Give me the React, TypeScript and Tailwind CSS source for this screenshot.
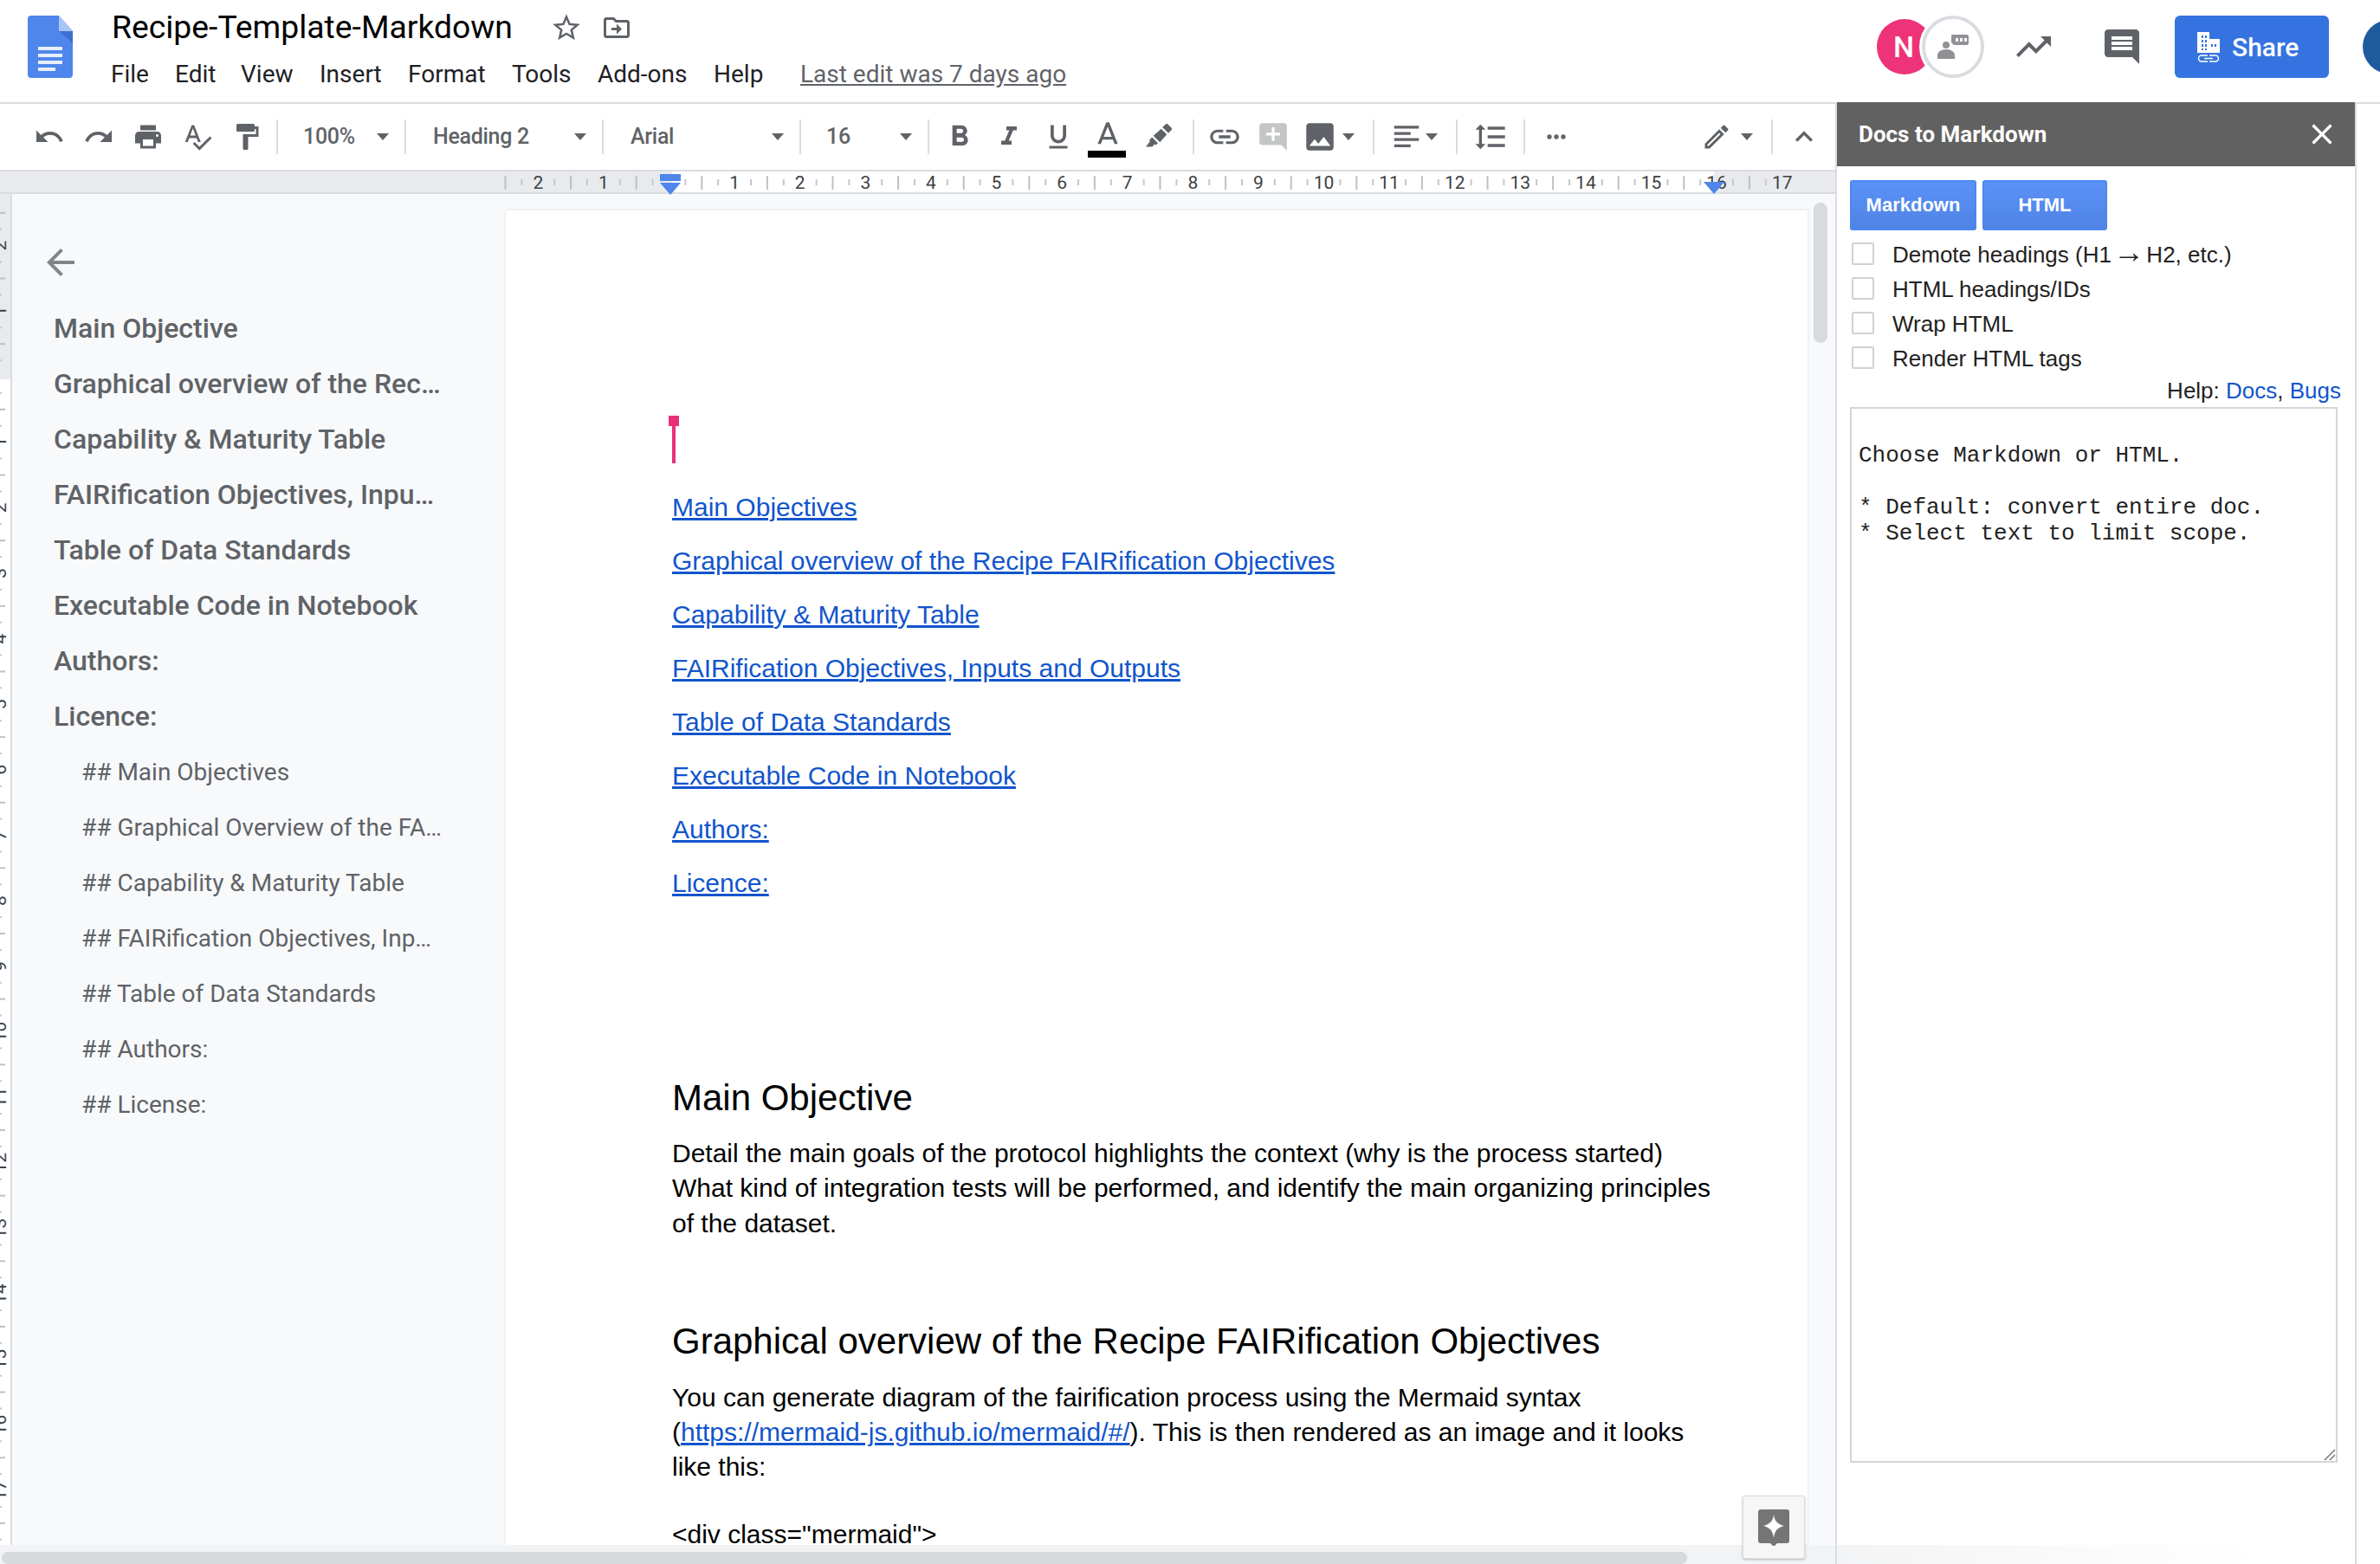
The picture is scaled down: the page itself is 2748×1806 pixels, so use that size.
import React from 'react';

const paths = {
  undo: 'M12.5 8c-2.65 0-5.05.99-6.9 2.6L2 7v9h9l-3.62-3.62c1.39-1.16 3.16-1.88 5.12-1.88 3.54 0 6.55 2.31 7.6 5.5l2.37-.78C21.08 11.03 17.15 8 12.5 8z',
  redo: 'M18.4 10.6C16.55 8.99 14.15 8 11.5 8c-4.65 0-8.58 3.03-9.96 7.22L3.9 16c1.05-3.19 4.05-5.5 7.6-5.5 1.95 0 3.73.72 5.12 1.88L13 16h9V7l-3.6 3.6z',
  print: 'M19 8H5c-1.66 0-3 1.34-3 3v6h4v4h12v-4h4v-6c0-1.66-1.34-3-3-3zm-3 11H8v-5h8v5zm3-7c-.55 0-1-.45-1-1s.45-1 1-1 1 .45 1 1-.45 1-1 1zm-1-9H6v4h12V3z',
  spell: 'M12.45 16h2.09L9.43 3H7.57L2.46 16h2.09l1.12-3h5.64l1.14 3zm-6.02-5L8.5 5.48 10.57 11H6.43zm15.16.59l-8.09 8.09L9.83 16l-1.41 1.41 5.09 5.09L23 13l-1.41-1.41z',
  paint: 'M18 4V3c0-.55-.45-1-1-1H5c-.55 0-1 .45-1 1v4c0 .55.45 1 1 1h12c.55 0 1-.45 1-1V6h1v4H9v11c0 .55.45 1 1 1h2c.55 0 1-.45 1-1v-9h8V4h-3z',
  bold: 'M15.6 10.79c.97-.67 1.65-1.77 1.65-2.79 0-2.26-1.75-4-4-4H7v14h7.04c2.09 0 3.71-1.7 3.71-3.79 0-1.52-.86-2.82-2.15-3.42zM10 6.5h3c.83 0 1.5.67 1.5 1.5s-.67 1.5-1.5 1.5h-3v-3zm3.5 9H10v-3h3.5c.83 0 1.5.67 1.5 1.5s-.67 1.5-1.5 1.5z',
  italic: 'M10 4v3h2.21l-3.42 8H6v3h8v-3h-2.21l3.42-8H18V4z',
  underline: 'M12 17c3.31 0 6-2.69 6-6V3h-2.5v8c0 1.93-1.57 3.5-3.5 3.5S8.5 12.93 8.5 11V3H6v8c0 3.31 2.69 6 6 6zm-7 2v2h14v-2H5z',
  letterA: 'M11 2L5 17h2.25l1.2-3h7.1l1.2 3H19L13 2h-2zm-1.75 10L12 4.9 14.75 12h-5.5z',
  marker: 'M17.4 2.2a1 1 0 011.4 0l3 3a1 1 0 010 1.4l-2.4 2.6-4.6-4.6zM13.800 5.800l4.400 4.400-5.400 6-5-5zM6.800 12.300l4.500 4.500-1.300 1.400-1.500-.3L7 19.600H2l3-3.700-.2-1.500z',
  link: 'M3.9 12c0-1.71 1.39-3.1 3.1-3.1h4V7H7c-2.76 0-5 2.24-5 5s2.24 5 5 5h4v-1.9H7c-1.71 0-3.1-1.39-3.1-3.1zM8 13h8v-2H8v2zm9-6h-4v1.9h4c1.71 0 3.1 1.39 3.1 3.1s-1.39 3.1-3.1 3.1h-4V17h4c2.76 0 5-2.24 5-5s-2.24-5-5-5z',
  commentAdd: 'M22 4c0-1.1-.9-2-2-2H4c-1.1 0-2 .9-2 2v12c0 1.1.9 2 2 2h14l4 4V4zm-5 7h-4v4h-2v-4H7V9h4V5h2v4h4v2z',
  image: 'M21 19V5c0-1.1-.9-2-2-2H5c-1.1 0-2 .9-2 2v14c0 1.1.9 2 2 2h14c1.1 0 2-.9 2-2zM8.5 13.5l2.5 3.01L14.5 12l4.500 6H5l3.5-4.5z',
  align: 'M3 4h18v2H3V4zm0 4.500h12v2H3v-2zM3 13h18v2H3v-2zm0 4.500h12v2H3v-2z',
  lineSpacing: 'M6 7h2.5L5 3.5 1.5 7H4v10H1.5L5 20.5 8.5 17H6V7zm4-2v2h12V5H10zm0 14h12v-2H10v2zm0-6h12v-2H10v2z',
  dots: 'M6 10a2 2 0 100 4 2 2 0 000-4zm6 0a2 2 0 100 4 2 2 0 000-4zm6 0a2 2 0 100 4 2 2 0 000-4z',
  pencil: 'M14.06 9.02l.92.92L5.92 19H5v-.92l9.06-9.06M17.66 3c-.25 0-.51.1-.7.29l-1.83 1.83 3.75 3.75 1.83-1.83c.39-.39.39-1.02 0-1.41l-2.34-2.34c-.2-.2-.45-.29-.71-.29zm-3.6 3.19L3 17.25V21h3.75L17.81 9.94l-3.75-3.75z',
  up: 'M12 8l-6 6 1.41 1.41L12 10.83l4.59 4.58L18 14z',
  trend: 'M16 6l2.29 2.29-4.88 4.88-4-4L2 16.59 3.41 18l6-6 4 4 6.3-6.29L22 12V6z',
  comment: 'M21.99 4c0-1.1-.89-2-1.99-2H4c-1.1 0-2 .9-2 2v12c0 1.1.9 2 2 2h14l4 4-.01-18zM18 14H6v-2h12v2zm0-3H6V9h12v2zm0-3H6V6h12v2z',
  star: 'M22 9.24l-7.19-.62L12 2 9.19 8.63 2 9.24l5.46 4.73L5.82 21 12 17.27 18.18 21l-1.63-7.03L22 9.24zM12 15.4l-3.76 2.27 1-4.28-3.32-2.88 4.38-.38L12 6.1l1.71 4.04 4.38.38-3.32 2.88 1 4.28L12 15.4z',
  move: 'M20 6h-8l-2-2H4c-1.1 0-2 .9-2 2v12c0 1.1.9 2 2 2h16c1.1 0 2-.9 2-2V8c0-1.1-.9-2-2-2zm0 12H4V6h5.17l2 2H20v10zm-8-1l4-4-4-4v3H8v2h4v3z',
  back: 'M20 11H7.83l5.59-5.59L12 4l-8 8 8 8 1.41-1.41L7.83 13H20v-2z',
  close: 'M19 6.41L17.59 5 12 10.59 6.41 5 5 6.41 10.59 12 5 17.59 6.41 19 12 13.41 17.59 19 19 17.59 13.41 12z',
};

const Icon = ({ d, size = 36, className = '' }: { d: string; size?: number; className?: string }) => (
  <svg viewBox="0 0 24 24" width={size} height={size} fill="currentColor" className={className}>
    <path d={d} />
  </svg>
);

const Caret = () => (
  <svg viewBox="0 0 14 10" width={14} height={10} fill="#5f6368" className="shrink-0">
    <path d="M0 1h14L7 9z" />
  </svg>
);

const Sep = () => <div className="w-[2px] h-[40px] bg-[#dadce0] shrink-0" />;

const Slot = ({ d, w = 'w-[57px]', size = 36, className = '' }: { d: string; w?: string; size?: number; className?: string }) => (
  <div className={`${w} shrink-0 flex items-center justify-center ${className}`}>
    <Icon d={d} size={size} />
  </div>
);

const Select = ({ label, w, pad = 'pl-[31px]' }: { label: string; w: string; pad?: string }) => (
  <div className={`${w} h-full shrink-0 flex items-center justify-between ${pad} pr-[18px]`}>
    <span className="text-[25px] font-medium text-[#5f6368] tracking-[-0.3px]">{label}</span>
    <Caret />
  </div>
);

const DocsLogo = () => (
  <svg viewBox="0 0 52 72" width={52} height={72}>
    <path d="M4 0h32l16 18v50a4 4 0 01-4 4H4a4 4 0 01-4-4V4a4 4 0 014-4z" fill="#4e86ec" />
    <path d="M36 0l16 18H36z" fill="#a9c4f7" />
    <path d="M36 18l16 14V18z" fill="#3d6fd0" />
    <path d="M12 36h28v4H12zm0 8h28v4H12zm0 8h28v4H12zm0 8h20v4H12z" fill="#e8eefb" />
  </svg>
);

const ShareIcon = () => (
  <svg viewBox="0 0 26 35" width={26} height={35} fill="white">
    <path
      fillRule="evenodd"
      d="M0 0h14v8h12v16H0zM5 4v3h2V4zm4 0v3h2V4zM5 9v3h2V9zm4 0v3h2V9zM5 14v3h2v-3zm4 0v3h2v-3zm7 0v3h2v-3zm4 0v3h2v-3zM5 19v2h2v-2zm4 0v2h2v-2z"
    />
    <path d="M12 27H5a3.500 3.500 0 000 7h7M14 27h7a3.500 3.500 0 010 7h-7M8 30.500h10" fill="none" stroke="white" strokeWidth="1.500" />
  </svg>
);

const PeopleIcon = () => (
  <svg viewBox="0 0 44 44" width={44} height={44} fill="#8f9195">
    <circle cx="14" cy="20" r="4" />
    <path d="M4 36v-4c0-4 4-7 10-7s10 3 10 7v4z" />
    <path d="M23 8h15a2 2 0 012 2v8a2 2 0 01-2 2H23l-3-3v-7a2 2 0 013-2z" />
    <path d="M25 12h3v4h-3zm5 0h3v4h-3zm5 0h3v4h-3z" fill="#fff" />
  </svg>
);

const ruler0 = 772.5;
const inch = 75.6;

const HorizontalRuler = () => {
  const ticks: React.ReactNode[] = [];
  for (let i = -10; i <= 68; i++) {
    const x = ruler0 + (i * inch) / 4;
    if (x < 580 || x > 2090) continue;
    const n = i / 4;
    if (i % 4 === 0) {
      if (n !== 0) {
        ticks.push(
          <text key={i} x={x} y={20} textAnchor="middle" fontSize="21" fill="#3c4043" fontFamily="Roboto, sans-serif">
            {Math.abs(n)}
          </text>,
        );
      }
    } else if (i % 2 === 0) {
      ticks.push(<rect key={i} x={x - 1} y={5} width={2} height={16} fill="#bdc1c6" />);
    } else {
      ticks.push(<rect key={i} x={x - 1} y={9} width={2} height={7} fill="#c4c7cb" />);
    }
  }
  return (
    <div className="relative h-[28px] bg-[#e8eaed] border-t-2 border-b-2 border-[#dadce0] shrink-0">
      <svg width={2119} height={24} className="block">
        <rect x={776} y={0} width={1203} height={24} fill="#fff" />
        {ticks}
      </svg>
      <svg width={26} height={24} className="absolute left-[761px] top-[3px]" fill="#4e86ec">
        <rect x={1} y={0} width={24} height={8} />
        <path d="M1 10h24L13 24z" />
      </svg>
      <svg width={26} height={14} className="absolute left-[1966px] top-[12px]" fill="#4e86ec">
        <path d="M1 0h24L13 14z" />
      </svg>
    </div>
  );
};

// the digits sit mostly past the left window edge, as in the real editor
const VerticalRuler = () => {
  const items: React.ReactNode[] = [];
  for (let i = -10; i <= 72; i++) {
    const y = 211 + (i * 75.65) / 4;
    const n = i / 4;
    if (i % 4 === 0) {
      if (n !== 0) {
        items.push(
          <text key={i} transform={`translate(7 ${y}) rotate(-90)`} textAnchor="middle" fontSize="21" fill="#3c4043" fontFamily="Roboto, sans-serif">
            {Math.abs(n)}
          </text>,
        );
      }
    } else if (i % 2 === 0) {
      items.push(<rect key={i} x={0} y={y - 1} width={6} height={2} fill="#bdc1c6" />);
    } else {
      items.push(<rect key={i} x={0} y={y - 1} width={2} height={2} fill="#c4c7cb" />);
    }
  }
  return (
    <div className="w-[14px] shrink-0 bg-white border-r-2 border-[#dadce0] overflow-hidden">
      <svg width={12} height={1560} className="block">
        <rect width={12} height={214} fill="#e8eaed" />
        {items}
      </svg>
    </div>
  );
};

const headings = [
  'Main Objective',
  'Graphical overview of the Rec…',
  'Capability & Maturity Table',
  'FAIRification Objectives, Inpu…',
  'Table of Data Standards',
  'Executable Code in Notebook',
  'Authors:',
  'Licence:',
];

const subHeadings = [
  '## Main Objectives',
  '## Graphical Overview of the FA…',
  '## Capability & Maturity Table',
  '## FAIRification Objectives, Inp…',
  '## Table of Data Standards',
  '## Authors:',
  '## License:',
];

const tocLinks = [
  'Main Objectives',
  'Graphical overview of the Recipe FAIRification Objectives',
  'Capability & Maturity Table',
  'FAIRification Objectives, Inputs and Outputs',
  'Table of Data Standards',
  'Executable Code in Notebook',
  'Authors:',
  'Licence:',
];

const options: React.ReactNode[] = [
  <>
    Demote headings (H1 <span className="inline-block -mx-[5px] text-[36px] leading-[0]">→</span> H2, etc.)
  </>,
  'HTML headings/IDs',
  'Wrap HTML',
  'Render HTML tags',
];

const Outline = () => (
  <aside className="w-[570px] shrink-0 pt-[55px] font-['Roboto',sans-serif] text-[#5f6368]">
    <Icon d={paths.back} size={48} className="ml-[32px] text-[#80868b]" />
    <div className="mt-[20px] pl-[48px]">
      {headings.map((h) => (
        <div key={h} className="h-[64px] flex items-center text-[32px] font-medium whitespace-nowrap">
          {h}
        </div>
      ))}
      <div className="h-[1px]" />
      {subHeadings.map((h) => (
        <div key={h} className="h-[64px] flex items-center pl-[32px] text-[28px] whitespace-nowrap">
          {h}
        </div>
      ))}
    </div>
  </aside>
);

const Page = () => (
  <main className="relative w-[1503px] shrink-0 mt-[19px] bg-white shadow-[0_0_3px_rgba(0,0,0,0.12)] pl-[192px] font-['Liberation_Sans',Arial,sans-serif] text-black">
    <div className="relative w-[12px] h-[55px] mt-[237px] -ml-[4px]">
      <div className="w-[12px] h-[12px] bg-[#e8317a]" />
      <div className="w-[4px] h-[43px] ml-[4px] bg-[#e8317a]" />
    </div>
    <div className="mt-[19px]">
      {tocLinks.map((l) => (
        <div key={l} className="h-[62px] flex items-center text-[30px]">
          <span className="text-[#1155cc] underline">{l}</span>
        </div>
      ))}
    </div>
    <h2 className="mt-[192px] h-[50px] flex items-center text-[42px] font-normal">Main Objective</h2>
    <p className="mt-[20px] w-[1203px] text-[30px] leading-[40.3px]">
      Detail the main goals of the protocol highlights the context (why is the process started) What kind of integration tests will be performed, and identify the main organizing principles of the dataset.
    </p>
    <h2 className="mt-[91px] h-[50px] flex items-center text-[42px] font-normal">Graphical overview of the Recipe FAIRification Objectives</h2>
    <p className="mt-[20px] w-[1203px] text-[30px] leading-[40.3px]">
      You can generate diagram of the fairification process using the Mermaid syntax (<span className="text-[#1155cc] underline">https://mermaid-js.github.io/mermaid/#/</span>). This is then rendered as an image and it looks like this:
    </p>
    <p className="mt-[37px] text-[30px] leading-[40.3px]">{'<div class="mermaid">'}</p>
  </main>
);

const SidePanel = () => (
  <section className="relative w-[602px] -mt-[2px] shrink-0 flex flex-col bg-white border-l-2 border-r-2 border-[#dadce0] font-['Liberation_Sans',Arial,sans-serif] text-[26px] text-[#222]">
    <div className="h-[74px] shrink-0 flex items-center justify-between pl-[25px] pr-[18px] bg-[#616161] text-white">
      <span className="text-[26px] font-bold font-['Roboto',sans-serif]">Docs to Markdown</span>
      <Icon d={paths.close} size={40} />
    </div>
    <div className="flex gap-[7px] mt-[16px] ml-[15px]">
      <button className="w-[146px] h-[58px] pb-[2px] rounded-[3px] border-2 border-[#4d87ef] bg-gradient-to-b from-[#5b92f7] to-[#4f83e6] text-[22px] font-bold text-white">Markdown</button>
      <button className="w-[144px] h-[58px] pb-[2px] rounded-[3px] border-2 border-[#4d87ef] bg-gradient-to-b from-[#5b92f7] to-[#4f83e6] text-[22px] font-bold text-white">HTML</button>
    </div>
    <div className="mt-[7px] ml-[17px] flex flex-col">
      {options.map((o, i) => (
        <label key={i} className="h-[40px] flex items-center">
          <span className="w-[26px] h-[26px] rounded-[2px] border-2 border-[#d1d1d1] shrink-0" />
          <span className="ml-[21px] mt-[2px] leading-none">{o}</span>
        </label>
      ))}
    </div>
    <div className="mt-[3px] pr-[16px] text-right leading-[30px]">
      Help: <span className="text-[#1155cc]">Docs</span>, <span className="text-[#1155cc]">Bugs</span>
    </div>
    <div className="relative ml-[15px] mt-[4px] w-[563px] h-[1219px] border-2 border-[#d5d5d5] pl-[8px] pt-[39px] font-['Liberation_Mono',monospace] text-[26px] leading-[30px] text-[#222] whitespace-pre">
      {'Choose Markdown or HTML.\n\n* Default: convert entire doc.\n* Select text to limit scope.'}
      <svg width={14} height={14} className="absolute right-0 bottom-0" stroke="#777" strokeWidth={1.500}>
        <path d="M1 13L13 1M7 13l6-6" />
      </svg>
    </div>
    <div className="absolute left-0 bottom-0 w-[480px] h-[22px] bg-gradient-to-r from-[#f3f4f5] to-white" />
  </section>
);

export default function App() {
  return (
    <div className="relative w-[2748px] h-[1806px] overflow-hidden flex flex-col bg-white font-['Roboto',sans-serif]">
      <header className="relative h-[120px] shrink-0 flex items-start border-b-2 border-[#dadce0]">
        <div className="ml-[32px] mt-[18px]">
          <DocsLogo />
        </div>
        <div className="ml-[45px] mt-[9px] flex flex-col">
          <div className="flex items-center h-[46px]">
            <span className="text-[37.3px] leading-none text-black">Recipe-Template-Markdown</span>
            <Icon d={paths.star} size={38} className="ml-[43px] text-[#5f6368]" />
            <Icon d={paths.move} size={36} className="ml-[21px] text-[#5f6368]" />
          </div>
          <nav className="-ml-[1px] flex items-center h-[40px] mt-[11px] text-[28px] text-[#202124] whitespace-nowrap">
            <span className="w-[74px]">File</span>
            <span className="w-[76px]">Edit</span>
            <span className="w-[91px]">View</span>
            <span className="w-[102px]">Insert</span>
            <span className="w-[120px]">Format</span>
            <span className="w-[99px]">Tools</span>
            <span className="w-[134px]">Add-ons</span>
            <span className="w-[100px]">Help</span>
            <span className="text-[#5f6368] underline">Last edit was 7 days ago</span>
          </nav>
        </div>
        <div className="absolute left-[2167px] top-[18px] flex items-center h-[72px]">
          <div className="w-[64px] h-[64px] rounded-full bg-[#ee3379] text-white text-[34px] font-medium flex items-center justify-center pr-[2px]">N</div>
          <div className="-ml-[12px] relative w-[72px] h-[72px] rounded-full bg-white border-[4px] border-[#dadce0] shadow-[0_0_0_3px_#ffffff] flex items-center justify-center">
            <PeopleIcon />
          </div>
          <Icon d={paths.trend} size={48} className="ml-[33px] text-[#5f6368]" />
          <Icon d={paths.comment} size={48} className="ml-[54px] text-[#5f6368]" />
          <div className="ml-[37px] w-[178px] h-[72px] rounded-[6px] bg-[#3574e0] text-white flex items-center pl-[26px]">
            <ShareIcon />
            <span className="ml-[14px] text-[30px] font-medium">Share</span>
          </div>
          <div className="ml-[39px] w-[62px] h-[62px] rounded-full bg-[#1f5a9e] shrink-0" />
        </div>
      </header>

      <div className="flex-1 min-h-0 flex">
        <div className="relative w-[2119px] shrink-0 flex flex-col">
          <div className="h-[76px] shrink-0 flex items-center pl-[28px] text-[#5f6368]">
            <Slot d={paths.undo} />
            <Slot d={paths.redo} />
            <Slot d={paths.print} />
            <Slot d={paths.spell} />
            <Slot d={paths.paint} />
            <div className="ml-[6px] flex items-center h-full">
              <Sep />
              <Select label="100%" w="w-[146px]" pad="pl-[29px]" />
              <Sep />
              <Select label="Heading 2" w="w-[226px]" />
              <Sep />
              <Select label="Arial" w="w-[226px]" />
              <Sep />
              <Select label="16" w="w-[146px]" pad="pl-[29px]" />
              <Sep />
            </div>
            <div className="ml-[6px] flex items-center h-full">
              <Slot d={paths.bold} size={40} />
              <Slot d={paths.italic} size={36} />
              <Slot d={paths.underline} size={36} />
              <div className="relative w-[57px] h-full flex items-center justify-center">
                <Icon d={paths.letterA} size={40} />
                <div className="absolute left-[6px] bottom-[14px] w-[44px] h-[8px] bg-black" />
              </div>
              <Slot d={paths.marker} size={36} w="w-[62px]" />
            </div>
            <div className="ml-[8px] flex items-center h-full">
              <Sep />
              <Slot d={paths.link} size={40} className="ml-[7px]" w="w-[56px]" />
              <Slot d={paths.commentAdd} size={38} w="w-[56px]" className="text-[#c4c5c7]" />
              <Slot d={paths.image} size={42} w="w-[52px]" />
              <Caret />
              <div className="w-[21px]" />
              <Sep />
              <Slot d={paths.align} size={38} w="w-[44px]" className="ml-[15px]" />
              <Caret />
              <div className="w-[21px]" />
              <Sep />
              <Slot d={paths.lineSpacing} size={40} w="w-[76px]" />
              <Sep />
              <Slot d={paths.dots} size={32} w="w-[72px]" />
            </div>
            <div className="flex-1" />
            <Slot d={paths.pencil} size={36} w="w-[56px]" />
            <Caret />
            <div className="w-[21px]" />
            <Sep />
            <Slot d={paths.up} size={40} w="w-[72px]" />
          </div>

          <HorizontalRuler />

          <div className="flex-1 min-h-0 flex bg-[#f8f9fa] overflow-hidden">
            <VerticalRuler />
            <Outline />
            <Page />
          </div>

          <div className="absolute left-[2094px] top-[114px] w-[16px] h-[162px] rounded-[8px] bg-[#d8dadd]" />

          <div className="h-[22px] shrink-0 bg-[#f1f3f4] pt-[8px] pl-[2px]">
            <div className="w-[1946px] h-[14px] rounded-l-[8px] rounded-r-[8px] bg-[#d7d9dc]" />
          </div>

          <div className="absolute left-[2012px] bottom-[6px] w-[72px] h-[73px] rounded-[3px] bg-[#f6f6f6] border border-[#dadce0] shadow-[0_1px_3px_rgba(0,0,0,0.25)] flex items-center justify-center">
            <svg viewBox="0 0 36 42" width={36} height={42}>
              <path d="M3 0h30a3 3 0 013 3v33a3 3 0 01-3 3h-11l-4 4-4-4H3a3 3 0 01-3-3V3a3 3 0 013-3z" fill="#757575" />
              <path d="M18 6c1 7 4 11 12 13-8 2-11 6-12 14-1-8-4-12-12-14 8-2 11-6 12-13z" fill="#fff" />
            </svg>
          </div>
        </div>

        <SidePanel />
        <div className="flex-1" />
      </div>
    </div>
  );
}
